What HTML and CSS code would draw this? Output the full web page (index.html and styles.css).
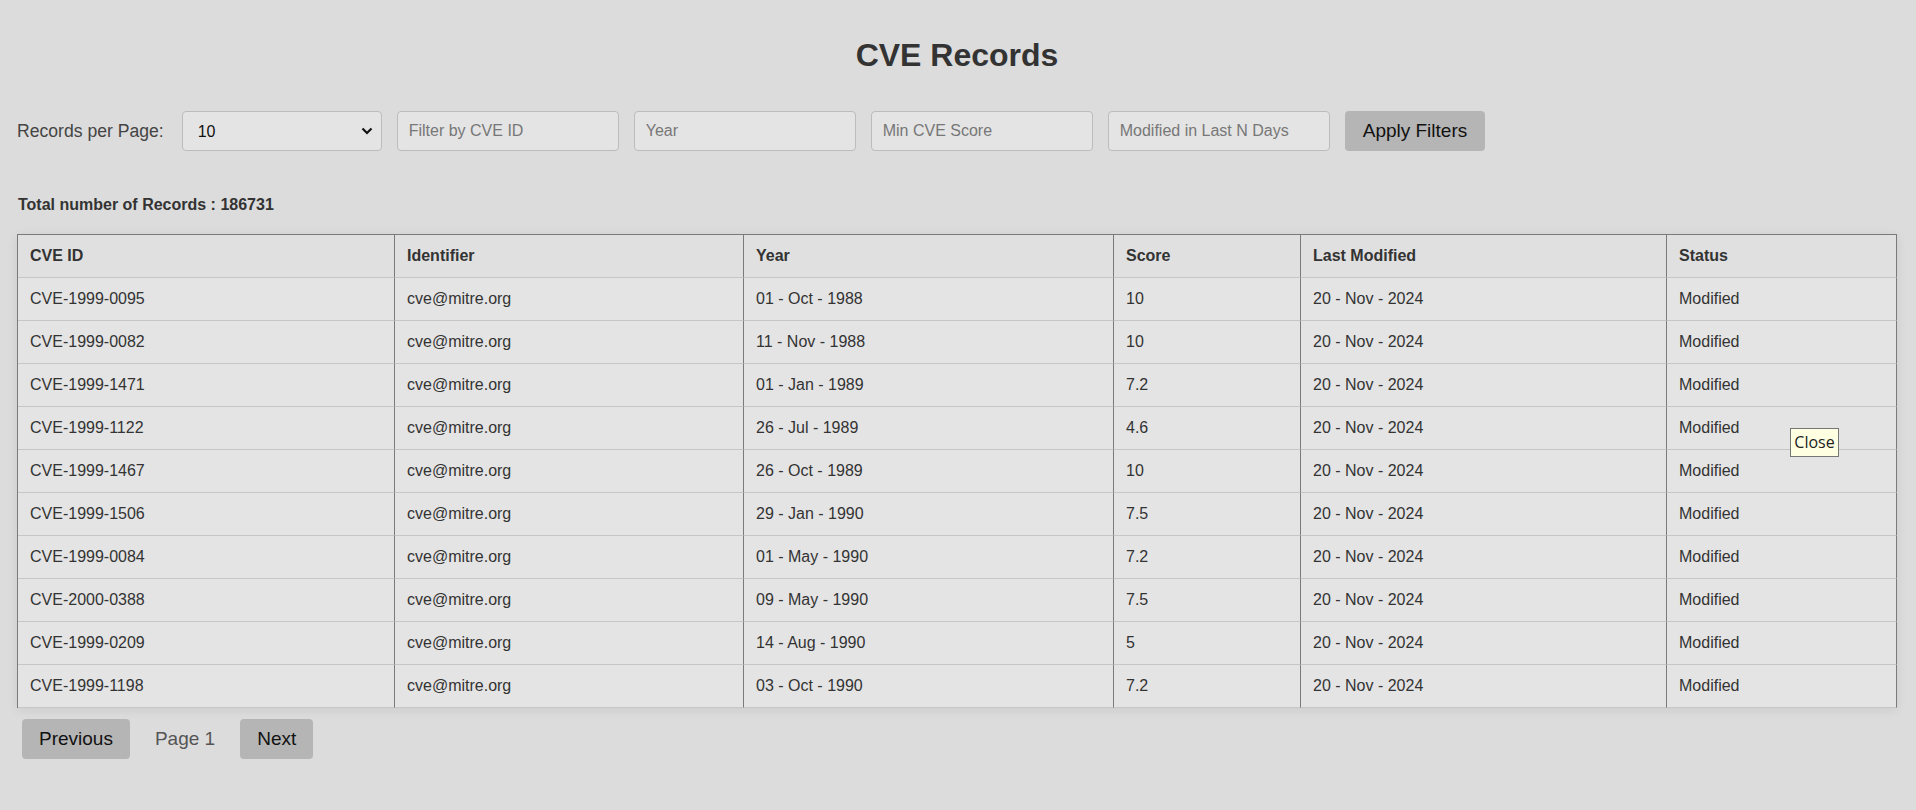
FILE: index.html
```html
<!DOCTYPE html>
<html lang="en">
<head>
<meta charset="utf-8">
<title>CVE Records</title>
<link rel="stylesheet" href="styles.css">
</head>
<body>
<div class="page">
  <h1 class="title">CVE Records</h1>
  <div class="filters">
    <label class="label">Records per Page:</label>
    <div class="select-wrap">
      <select class="select">
        <option>10</option>
        <option>20</option>
        <option>50</option>
      </select>
      <svg class="chevron" width="12" height="8" viewBox="0 0 12 8"><path d="M1.5 1.5 L6 6 L10.5 1.5" fill="none" stroke="#111" stroke-width="2.2"/></svg>
    </div>
    <input class="field" type="text" placeholder="Filter by CVE ID">
    <input class="field" type="text" placeholder="Year">
    <input class="field" type="text" placeholder="Min CVE Score">
    <input class="field" type="text" placeholder="Modified in Last N Days">
    <button class="btn">Apply Filters</button>
  </div>
  <p class="total">Total number of Records : 186731</p>
  <div class="table-wrap">
    <table class="table">
      <colgroup>
        <col class="c1"><col class="c2"><col class="c3"><col class="c4"><col class="c5"><col class="c6">
      </colgroup>
      <thead>
        <tr><th>CVE ID</th><th>Identifier</th><th>Year</th><th>Score</th><th>Last Modified</th><th>Status</th></tr>
      </thead>
      <tbody>
        <tr><td>CVE-1999-0095</td><td>cve@mitre.org</td><td>01 - Oct - 1988</td><td>10</td><td>20 - Nov - 2024</td><td>Modified</td></tr>
        <tr><td>CVE-1999-0082</td><td>cve@mitre.org</td><td>11 - Nov - 1988</td><td>10</td><td>20 - Nov - 2024</td><td>Modified</td></tr>
        <tr><td>CVE-1999-1471</td><td>cve@mitre.org</td><td>01 - Jan - 1989</td><td>7.2</td><td>20 - Nov - 2024</td><td>Modified</td></tr>
        <tr><td>CVE-1999-1122</td><td>cve@mitre.org</td><td>26 - Jul - 1989</td><td>4.6</td><td>20 - Nov - 2024</td><td>Modified</td></tr>
        <tr><td>CVE-1999-1467</td><td>cve@mitre.org</td><td>26 - Oct - 1989</td><td>10</td><td>20 - Nov - 2024</td><td>Modified</td></tr>
        <tr><td>CVE-1999-1506</td><td>cve@mitre.org</td><td>29 - Jan - 1990</td><td>7.5</td><td>20 - Nov - 2024</td><td>Modified</td></tr>
        <tr><td>CVE-1999-0084</td><td>cve@mitre.org</td><td>01 - May - 1990</td><td>7.2</td><td>20 - Nov - 2024</td><td>Modified</td></tr>
        <tr><td>CVE-2000-0388</td><td>cve@mitre.org</td><td>09 - May - 1990</td><td>7.5</td><td>20 - Nov - 2024</td><td>Modified</td></tr>
        <tr><td>CVE-1999-0209</td><td>cve@mitre.org</td><td>14 - Aug - 1990</td><td>5</td><td>20 - Nov - 2024</td><td>Modified</td></tr>
        <tr><td>CVE-1999-1198</td><td>cve@mitre.org</td><td>03 - Oct - 1990</td><td>7.2</td><td>20 - Nov - 2024</td><td>Modified</td></tr>
      </tbody>
    </table>
    <div class="tooltip">Close</div>
  </div>
  <div class="pager">
    <button class="btn pbtn">Previous</button>
    <span class="pageno">Page 1</span>
    <button class="btn pbtn">Next</button>
  </div>
</div>
</body>
</html>
```
FILE: styles.css
```css
* { box-sizing: border-box; }
html, body { margin: 0; padding: 0; }
body {
  background: #dcdcdc;
  font-family: "Liberation Sans", Arial, sans-serif;
  color: #333;
  height: 810px;
  overflow: hidden;
}
.page {
  padding: 37px 19px 0 17px;
}
.title {
  margin: 0;
  font-size: 32px;
  line-height: 37px;
  font-weight: bold;
  text-align: center;
  color: #333;
}
.filters {
  display: flex;
  align-items: center;
  gap: 15px;
  margin-top: 37px;
  height: 40px;
}
.label {
  font-size: 17.6px;
  color: #444;
  margin-right: 3px;
}
.select-wrap {
  position: relative;
  width: 200px;
  height: 40px;
}
.select {
  appearance: none;
  -webkit-appearance: none;
  width: 100%;
  height: 100%;
  background: #e4e4e4;
  border: 1px solid #bcbcbc;
  border-radius: 4px;
  padding: 0 12px 0 15px;
  font-family: "Liberation Sans", Arial, sans-serif;
  font-size: 16px;
  color: #111;
}
.chevron {
  position: absolute;
  right: 9px;
  top: 16px;
  pointer-events: none;
}
.field {
  width: 222px;
  height: 40px;
  background: #e4e4e4;
  border: 1px solid #bcbcbc;
  border-radius: 4px;
  padding: 0 11px;
  font-family: "Liberation Sans", Arial, sans-serif;
  font-size: 16px;
  color: #333;
}
.field::placeholder { color: #777; }
.btn {
  height: 40px;
  background: #b5b5b5;
  border: none;
  border-radius: 4px;
  padding: 0 18px;
  font-family: "Liberation Sans", Arial, sans-serif;
  font-size: 19px;
  color: #111;
}
.total {
  margin: 45px 0 0 1px;
  font-size: 16px;
  line-height: 18px;
  font-weight: bold;
  color: #333;
}
.table-wrap {
  position: relative;
  margin-top: 20px;
}
.table {
  width: 1880px;
  table-layout: fixed;
  border-collapse: separate;
  border-spacing: 0;
  border-top: 1px solid #7a7a7a;
  border-left: 1px solid #7a7a7a;
  background: #e4e4e4;
  box-shadow: 0 2px 10px rgba(0, 0, 0, 0.08);
}
.c1 { width: 377px; }
.c2 { width: 349px; }
.c3 { width: 370px; }
.c4 { width: 187px; }
.c5 { width: 366px; }
.c6 { width: 230px; }
.table th, .table td {
  padding: 12px;
  line-height: 18px;
  font-size: 16px;
  text-align: left;
  color: #333;
  border-right: 1px solid #7a7a7a;
  border-bottom: 1px solid #c6c6c6;
  white-space: nowrap;
}
.table th {
  background: #e0e0e0;
  font-weight: bold;
}
.tooltip {
  position: absolute;
  left: 1773px;
  top: 194px;
  width: 49px;
  height: 29px;
  background: #ffffe1;
  border: 1px solid #767676;
  font-family: "Open Sans", "Noto Sans", sans-serif;
  font-size: 16px;
  line-height: 26px;
  color: #222;
  text-align: center;
}
.pager {
  display: flex;
  align-items: center;
  margin-top: 11px;
  padding-left: 5px;
}
.pbtn {
  font-size: 19px;
  padding: 0 17px;
}
.pageno {
  font-size: 19px;
  color: #555;
  margin: 0 25px;
}
```
